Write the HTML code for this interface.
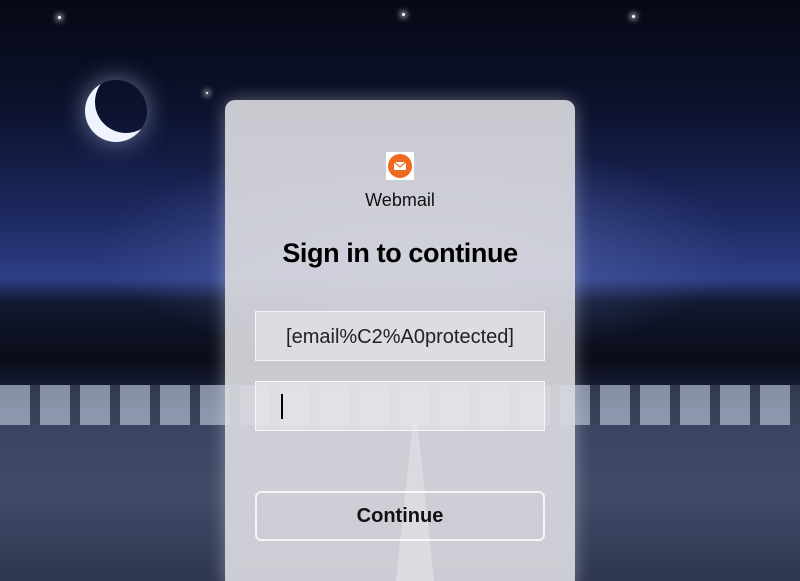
<!DOCTYPE html>
<html><head><meta charset="utf-8"><style>
html,body{margin:0;padding:0;width:800px;height:581px;overflow:hidden}
body{position:relative;font-family:"Liberation Sans",sans-serif;
background:
 radial-gradient(ellipse 320px 110px at 420px 250px,rgba(110,130,200,.5),transparent),
 linear-gradient(180deg,#060814 0%,#0d1330 20%,#1e2a63 38%,#2f3f86 48%,#111830 52%,#0a0d18 62%,#141a30 66%,#3a4462 72%,#414b68 85%,#2e3650 100%);}
.moon{position:absolute;left:85px;top:80px;width:62px;height:62px;border-radius:50%;box-shadow:inset 10px -9px 0 0 #eef3ff,0 0 25px rgba(200,220,255,.5)}
.rail{position:absolute;left:0;top:385px;width:800px;height:40px;background:repeating-linear-gradient(90deg,#a9b3c8 0 30px,#3a4258 30px 40px);opacity:.75}
.line{position:absolute;left:395px;top:420px;width:40px;height:170px;background:linear-gradient(180deg,#cfd6e6,#eef1f8);clip-path:polygon(45% 0,55% 0,100% 100%,0 100%)}
.star{position:absolute;width:3px;height:3px;background:#fff;border-radius:50%;box-shadow:0 0 6px 2px rgba(255,255,255,.7)}
.card{position:absolute;left:225px;top:100px;width:350px;height:490px;border-radius:10px;background:rgba(218,218,224,.92);box-shadow:0 0 18px rgba(255,255,255,.35)}
.logo{position:absolute;left:161px;top:52px;width:28px;height:28px;background:#fff;display:flex;align-items:center;justify-content:center}
.logo div{width:24px;height:24px;border-radius:50%;background:#ee6a1e;position:relative}
.brand{position:absolute;top:90px;width:100%;text-align:center;font-size:18px;color:#111}
h1{position:absolute;top:138px;width:100%;margin:0;text-align:center;font-size:27px;font-weight:bold;color:#000;letter-spacing:-.4px}
.in{position:absolute;left:30px;width:290px;height:50px;border:1px solid rgba(255,255,255,.7);background:rgba(235,235,240,.55);box-sizing:border-box}
.t{font-size:20px;color:#222;text-align:center;line-height:50px}
.btn{position:absolute;left:30px;top:391px;width:290px;height:50px;border:2px solid rgba(255,255,255,.8);border-radius:6px;box-sizing:border-box;text-align:center;line-height:46px;font-size:20px;font-weight:bold;color:#111}
</style></head><body>
<div class="star" style="left:58px;top:16px"></div>
<div class="star" style="left:402px;top:13px"></div>
<div class="star" style="left:632px;top:15px"></div>
<div class="star" style="left:206px;top:92px;width:2px;height:2px"></div>
<div class="moon"></div>
<div class="rail"></div>
<div class="line"></div>
<div class="card">
 <div class="logo"><div><svg width="24" height="24" viewBox="0 0 24 24"><rect x="6" y="8" width="12" height="8" fill="#fff"/><path d="M6 8l6 5 6-5" stroke="#ee6a1e" stroke-width="1.2" fill="none"/></svg></div></div>
 <div class="brand">Webmail</div>
 <h1>Sign in to continue</h1>
 <div class="in t" style="top:211px">[email%C2%A0protected]</div>
 <div class="in" style="top:281px"><div style="position:absolute;left:25px;top:12px;width:1.5px;height:25px;background:#000"></div></div>
 <div class="btn">Continue</div>
</div>
</body></html>
